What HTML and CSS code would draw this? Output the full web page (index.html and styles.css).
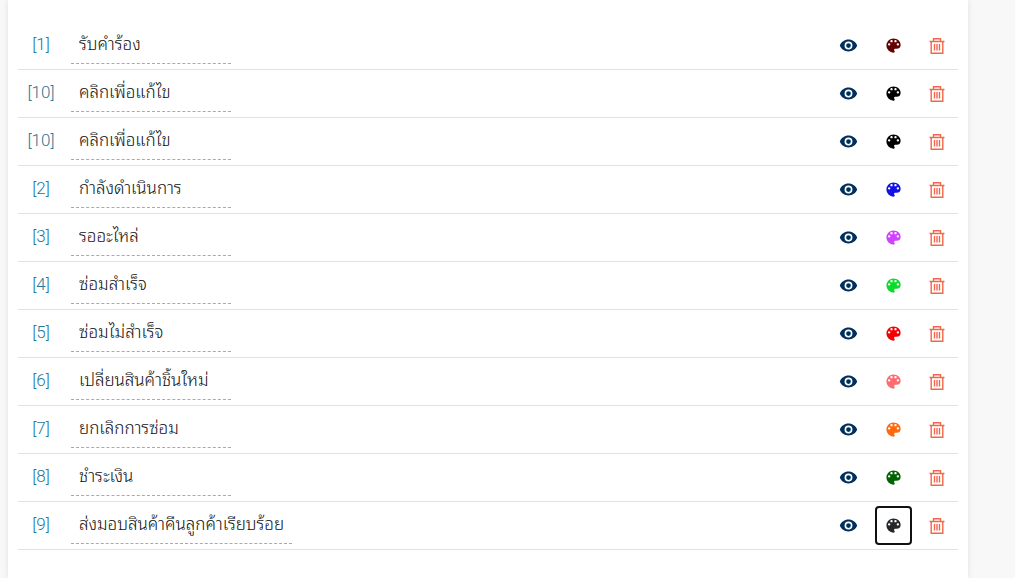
FILE: index.html
```
<!DOCTYPE html>
<html lang="th">
<head>
  <meta charset="UTF-8">
  <meta name="viewport" content="width=device-width, initial-scale=1">
  <title>สถานะการซ่อม</title>
  <link rel="stylesheet" href="styles.css">
</head>
<body>
  <svg class="sprite" aria-hidden="true">
    <symbol id="icon-eye" viewBox="0 0 24 24">
      <path fill="currentColor" d="M12 9a3 3 0 0 0-3 3 3 3 0 0 0 3 3 3 3 0 0 0 3-3 3 3 0 0 0-3-3m0 8a5 5 0 0 1-5-5 5 5 0 0 1 5-5 5 5 0 0 1 5 5 5 5 0 0 1-5 5m0-12.500C7 4.500 2.730 7.610 1 12c1.730 4.390 6 7.500 11 7.500s9.270-3.110 11-7.500c-1.730-4.390-6-7.500-11-7.500z"/>
    </symbol>
    <symbol id="icon-palette" viewBox="0 0 24 24">
      <path fill="currentColor" d="M17.500 12a1.500 1.500 0 0 1-1.500-1.500A1.500 1.500 0 0 1 17.500 9a1.500 1.500 0 0 1 1.500 1.500 1.500 1.500 0 0 1-1.500 1.500m-3-4A1.500 1.500 0 0 1 13 6.500 1.500 1.500 0 0 1 14.500 5 1.500 1.500 0 0 1 16 6.500 1.500 1.500 0 0 1 14.500 8m-5 0A1.500 1.500 0 0 1 8 6.500 1.500 1.500 0 0 1 9.500 5 1.500 1.500 0 0 1 11 6.500 1.500 1.500 0 0 1 9.500 8m-3 4A1.500 1.500 0 0 1 5 10.500 1.500 1.500 0 0 1 6.500 9 1.500 1.500 0 0 1 8 10.500 1.500 1.500 0 0 1 6.500 12M12 3a9 9 0 0 0-9 9 9 9 0 0 0 9 9 1.500 1.500 0 0 0 1.500-1.500c0-.390-.150-.740-.390-1-.230-.270-.380-.620-.380-1a1.500 1.500 0 0 1 1.500-1.500H16a5 5 0 0 0 5-5c0-4.420-4.030-8-9-8z"/>
    </symbol>
    <symbol id="icon-trash" viewBox="0 0 18 18">
      <path fill="none" stroke="currentColor" stroke-width="1.400" d="M1.500 4.500h15M5.500 4V1.700h7V4M3.200 4.500v11.800h11.600V4.500M6.500 7v6.500M9 7v6.500M11.500 7v6.500"/>
    </symbol>
  </svg>

  <main class="card">
    <ul class="status-list">
      <li class="status">
        <span class="status-id">[1]</span>
        <span class="status-name" contenteditable="true" role="textbox" aria-label="สถานะ 1">รับคำร้อง</span>
        <button class="btn view" type="button" aria-label="แสดง"><svg><use href="#icon-eye"/></svg></button>
        <button class="btn color maroon" type="button" aria-label="สี"><svg><use href="#icon-palette"/></svg></button>
        <button class="btn delete" type="button" aria-label="ลบ"><svg><use href="#icon-trash"/></svg></button>
      </li>
      <li class="status">
        <span class="status-id">[10]</span>
        <span class="status-name" contenteditable="true" role="textbox" aria-label="สถานะ 10">คลิกเพื่อแก้ไข</span>
        <button class="btn view" type="button" aria-label="แสดง"><svg><use href="#icon-eye"/></svg></button>
        <button class="btn color black" type="button" aria-label="สี"><svg><use href="#icon-palette"/></svg></button>
        <button class="btn delete" type="button" aria-label="ลบ"><svg><use href="#icon-trash"/></svg></button>
      </li>
      <li class="status">
        <span class="status-id">[10]</span>
        <span class="status-name" contenteditable="true" role="textbox" aria-label="สถานะ 10">คลิกเพื่อแก้ไข</span>
        <button class="btn view" type="button" aria-label="แสดง"><svg><use href="#icon-eye"/></svg></button>
        <button class="btn color black" type="button" aria-label="สี"><svg><use href="#icon-palette"/></svg></button>
        <button class="btn delete" type="button" aria-label="ลบ"><svg><use href="#icon-trash"/></svg></button>
      </li>
      <li class="status">
        <span class="status-id">[2]</span>
        <span class="status-name" contenteditable="true" role="textbox" aria-label="สถานะ 2">กำลังดำเนินการ</span>
        <button class="btn view" type="button" aria-label="แสดง"><svg><use href="#icon-eye"/></svg></button>
        <button class="btn color blue" type="button" aria-label="สี"><svg><use href="#icon-palette"/></svg></button>
        <button class="btn delete" type="button" aria-label="ลบ"><svg><use href="#icon-trash"/></svg></button>
      </li>
      <li class="status">
        <span class="status-id">[3]</span>
        <span class="status-name" contenteditable="true" role="textbox" aria-label="สถานะ 3">รออะไหล่</span>
        <button class="btn view" type="button" aria-label="แสดง"><svg><use href="#icon-eye"/></svg></button>
        <button class="btn color purple" type="button" aria-label="สี"><svg><use href="#icon-palette"/></svg></button>
        <button class="btn delete" type="button" aria-label="ลบ"><svg><use href="#icon-trash"/></svg></button>
      </li>
      <li class="status">
        <span class="status-id">[4]</span>
        <span class="status-name" contenteditable="true" role="textbox" aria-label="สถานะ 4">ซ่อมสำเร็จ</span>
        <button class="btn view" type="button" aria-label="แสดง"><svg><use href="#icon-eye"/></svg></button>
        <button class="btn color lime" type="button" aria-label="สี"><svg><use href="#icon-palette"/></svg></button>
        <button class="btn delete" type="button" aria-label="ลบ"><svg><use href="#icon-trash"/></svg></button>
      </li>
      <li class="status">
        <span class="status-id">[5]</span>
        <span class="status-name" contenteditable="true" role="textbox" aria-label="สถานะ 5">ซ่อมไม่สำเร็จ</span>
        <button class="btn view" type="button" aria-label="แสดง"><svg><use href="#icon-eye"/></svg></button>
        <button class="btn color red" type="button" aria-label="สี"><svg><use href="#icon-palette"/></svg></button>
        <button class="btn delete" type="button" aria-label="ลบ"><svg><use href="#icon-trash"/></svg></button>
      </li>
      <li class="status">
        <span class="status-id">[6]</span>
        <span class="status-name" contenteditable="true" role="textbox" aria-label="สถานะ 6">เปลี่ยนสินค้าชิ้นใหม่</span>
        <button class="btn view" type="button" aria-label="แสดง"><svg><use href="#icon-eye"/></svg></button>
        <button class="btn color pink" type="button" aria-label="สี"><svg><use href="#icon-palette"/></svg></button>
        <button class="btn delete" type="button" aria-label="ลบ"><svg><use href="#icon-trash"/></svg></button>
      </li>
      <li class="status">
        <span class="status-id">[7]</span>
        <span class="status-name" contenteditable="true" role="textbox" aria-label="สถานะ 7">ยกเลิกการซ่อม</span>
        <button class="btn view" type="button" aria-label="แสดง"><svg><use href="#icon-eye"/></svg></button>
        <button class="btn color orange" type="button" aria-label="สี"><svg><use href="#icon-palette"/></svg></button>
        <button class="btn delete" type="button" aria-label="ลบ"><svg><use href="#icon-trash"/></svg></button>
      </li>
      <li class="status">
        <span class="status-id">[8]</span>
        <span class="status-name" contenteditable="true" role="textbox" aria-label="สถานะ 8">ชำระเงิน</span>
        <button class="btn view" type="button" aria-label="แสดง"><svg><use href="#icon-eye"/></svg></button>
        <button class="btn color green" type="button" aria-label="สี"><svg><use href="#icon-palette"/></svg></button>
        <button class="btn delete" type="button" aria-label="ลบ"><svg><use href="#icon-trash"/></svg></button>
      </li>
      <li class="status">
        <span class="status-id">[9]</span>
        <span class="status-name" contenteditable="true" role="textbox" aria-label="สถานะ 9">ส่งมอบสินค้าคืนลูกค้าเรียบร้อย</span>
        <button class="btn view" type="button" aria-label="แสดง"><svg><use href="#icon-eye"/></svg></button>
        <button class="btn color dark active" type="button" aria-label="สี"><svg><use href="#icon-palette"/></svg></button>
        <button class="btn delete" type="button" aria-label="ลบ"><svg><use href="#icon-trash"/></svg></button>
      </li>
    </ul>
  </main>
</body>
</html>
```
FILE: styles.css
```
* {
  box-sizing: border-box;
}
body {
  margin: 0;
  padding: 0 47px 0 8px;
  background: #f8f8f8;
  font-family: Roboto, "Noto Sans Thai Looped", "Noto Looped Thai", Sarabun, Laksaman, Loma, Garuda, Waree, sans-serif;
  font-size: 17px;
  font-weight: 300;
}
.sprite {
  display: none;
}
.card {
  min-height: 100vh;
  padding: 22px 10px 28px;
  background: #fff;
  box-shadow: 0 0 6px rgba(0, 0, 0, 0.1);
}
.status-list {
  margin: 0;
  padding: 0;
  list-style: none;
}
.status {
  display: flex;
  align-items: center;
  gap: 7px;
  padding: 4px 3px 4px 0;
  border-bottom: 1px solid #dee2e6;
}
.status-id {
  width: 46px;
  padding-bottom: 4px;
  line-height: 24px;
  text-align: center;
  color: #25799b;
}
.status-name {
  min-width: 160px;
  padding: 5px 8px 7px;
  border-bottom: 1px dashed #aaa;
  line-height: 24px;
  white-space: nowrap;
  color: #111;
}
.btn {
  display: flex;
  align-items: center;
  justify-content: center;
  width: 37px;
  height: 39px;
  padding: 0;
  border: 2px solid transparent;
  border-radius: 4px;
  background: none;
  cursor: pointer;
}
.btn svg {
  width: 19px;
  height: 19px;
}
.btn.active {
  border-color: #111;
}
.btn.view {
  width: 39px;
  margin-left: auto;
  color: #002f5f;
}
.btn.delete {
  width: 36px;
  color: #f0694b;
}
.btn.delete svg {
  width: 18px;
  height: 18px;
}
.maroon { color: #640000; }
.black { color: #000; }
.blue { color: #1010e8; }
.purple { color: #d042ff; }
.lime { color: #0bdc2c; }
.red { color: #f50000; }
.pink { color: #ff6b70; }
.orange { color: #ff6a0d; }
.green { color: #006400; }
.dark { color: #25282b; }
```
